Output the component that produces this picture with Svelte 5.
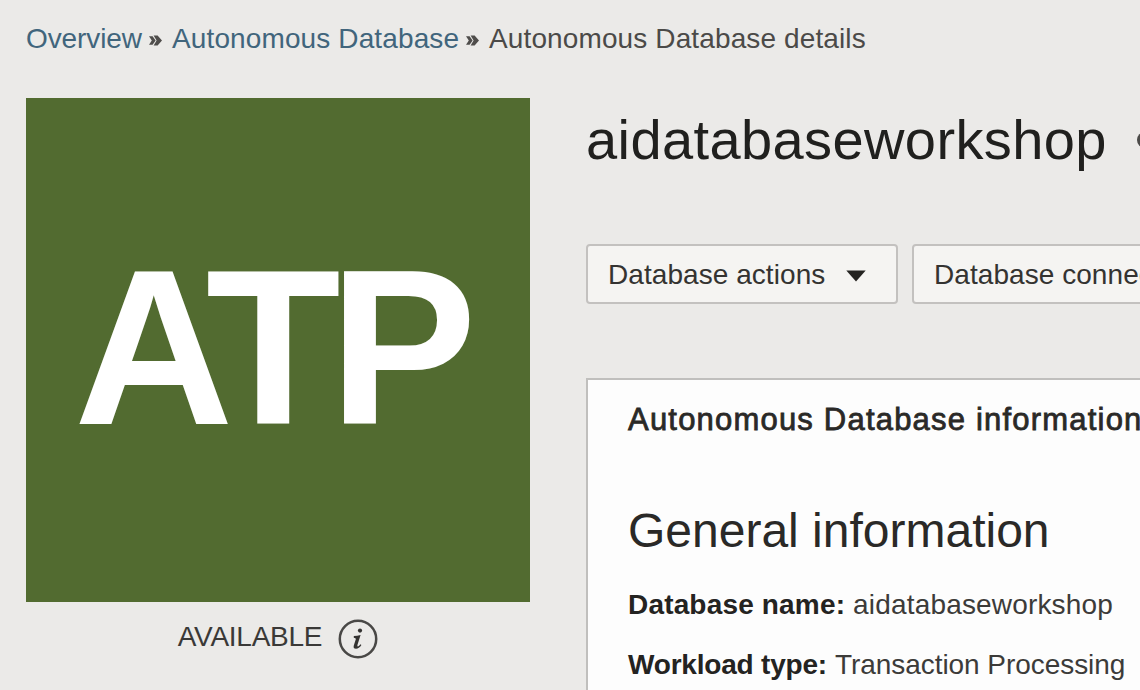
<script>
  const facts = [
    { label: 'Database name:', value: 'aidatabaseworkshop', tight: false },
    { label: 'Workload type:', value: 'Transaction Processing', tight: true },
  ];
</script>

<div class="page">
  <nav class="crumbs">
    <a href="#overview" class="first">Overview</a>
    <svg class="sep" width="13" height="13" viewBox="0 0 13 13"><path d="M0 2.2h3.6l3 4.3-3 4.3H0l2.8-4.3zM4.6 1.6h4l4.4 4.9-4.4 4.9h-4l3-4.9z" fill="#4f4d4b" /></svg>
    <a href="#adb" class="second">Autonomous Database</a>
    <svg class="sep" width="13" height="13" viewBox="0 0 13 13"><path d="M0 2.2h3.6l3 4.3-3 4.3H0l2.8-4.3zM4.6 1.6h4l4.4 4.9-4.4 4.9h-4l3-4.9z" fill="#4f4d4b" /></svg>
    <span class="current">Autonomous Database details</span>
  </nav>

  <div class="columns">
    <aside>
      <div class="tile">ATP</div>
      <div class="status">
        <span>AVAILABLE</span>
        <svg width="40" height="40" viewBox="0 0 40 40" fill="none">
          <circle cx="20" cy="20" r="18.2" stroke="#494846" stroke-width="2.5" />
          <circle cx="22" cy="11.6" r="2.1" fill="#343331" />
          <path d="M15.8 17q3.4-.2 6.8-1l-3.1 9.8q-.5 1.9.5 1.7 1-.2 2.5-2.2l.9.7q-2.4 3.8-5.4 3.8-3.1 0-2.2-3.3l2-6.2q.4-1.3-2-1.5z" fill="#343331" />
        </svg>
      </div>
    </aside>

    <main>
      <header>
        <h1>aidatabaseworkshop</h1>
        <span class="dot"></span>
      </header>
      <div class="actions">
        <button class="menu">
          <span>Database actions</span>
          <svg width="20" height="12" viewBox="0 0 20 12"><path d="M0.3 0.5h19.4L10 11.5z" fill="#242321" /></svg>
        </button>
        <button class="connect"><span>Database connection</span></button>
      </div>
      <section>
        <h2>Autonomous Database information</h2>
        <h3>General information</h3>
        {#each facts as f}
          <p><b class:tight={f.tight}>{f.label}</b> <span class:tight={f.tight}>{f.value}</span></p>
        {/each}
      </section>
    </main>
  </div>
</div>

<style>
  :global(body) { background: #ebeae8; overflow: hidden; }
  .page {
    box-sizing: border-box;
    width: 1140px;
    height: 690px;
    overflow: hidden;
    padding-left: 26px;
    background: #ebeae8;
    color: #3c3b39;
    font: 28px/76px "Liberation Sans", Arial, sans-serif;
    white-space: nowrap;
  }
  .crumbs { display: flex; align-items: center; height: 98px; box-sizing: border-box; padding-bottom: 20px; }
  .crumbs a { color: #41657c; text-decoration: none; }
  .first { width: 123px; letter-spacing: -0.1px; }
  .second { width: 294px; margin-left: 10px; letter-spacing: 0.12px; }
  .crumbs .sep { flex: none; margin-top: 3px; }
  .current { margin-left: 10px; color: #4b4a48; letter-spacing: 0.12px; }
  .columns { display: grid; grid-template-columns: 504px 554px; column-gap: 56px; }
  .tile {
    box-sizing: border-box;
    height: 504px;
    padding-left: 48px;
    background: #526b30;
    color: #fff;
    font-weight: 700;
    font-size: 221px;
    line-height: 499px;
    letter-spacing: -11.5px;
  }
  .status { display: flex; justify-content: center; align-items: center; gap: 16px; height: 72px; color: #3a3937; }
  .status span { letter-spacing: -0.25px; line-height: 70px; padding-bottom: 2px; }
  .status svg { margin-top: 1px; }
  header { display: flex; align-items: center; height: 146px; box-sizing: border-box; padding-bottom: 63px; }
  h1, h2, h3, p { margin: 0; font-weight: 400; }
  h1 { flex: none; width: 551px; font-size: 56px; line-height: 82px; color: #20201e; letter-spacing: 0.4px; }
  .dot { flex: none; width: 16px; height: 16px; border-radius: 50%; background: #4b4a48; }
  .actions { display: flex; gap: 14px; height: 60px; }
  button {
    display: flex;
    align-items: center;
    flex: none;
    box-sizing: border-box;
    height: 60px;
    margin: 0;
    padding: 1px 0 0 20px;
    border: 2px solid #c3c1bf;
    border-radius: 4px;
    background: #f5f4f2;
    color: #343331;
    font: inherit;
    line-height: 56px;
    letter-spacing: 0.06px;
  }
  .menu { width: 312px; gap: 21px; }
  .menu svg { margin-top: 3px; }
  .connect { width: 340px; }
  section { margin-top: 74px; height: 330px; box-sizing: border-box; border: solid #c0bfbd; border-width: 2px 0 0 2px; padding-left: 40px; background: #fdfdfd; color: #3c3b39; }
  h2 { font-size: 31px; line-height: 80px; letter-spacing: 1.2px; color: #2a2927; -webkit-text-stroke: 0.8px #2a2927; }
  h3 { font-size: 48px; line-height: 60px; margin: 41px 0 14px; color: #2a2927; }
  p { line-height: 60px; letter-spacing: 0.17px; }
  b { color: #242321; }
  .tight { letter-spacing: -0.05px; }
  b.tight { letter-spacing: -0.2px; }
</style>
